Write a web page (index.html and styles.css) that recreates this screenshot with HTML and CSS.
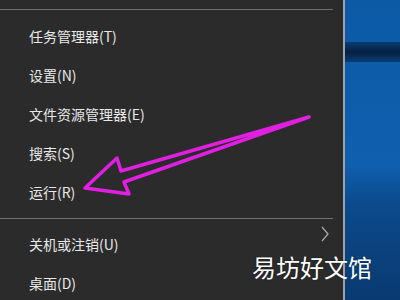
FILE: index.html
```html
<!DOCTYPE html>
<html lang="zh-CN">
<head>
    <meta charset="UTF-8">
    <meta name="viewport" content="width=device-width, initial-scale=1.0">
    <title>开始菜单</title>
    <link rel="stylesheet" href="styles.css">
</head>
<body>
    <div id="screen">
        <!-- Win+X menu -->
        <div id="menu">
            <div class="separator"></div>
            <div class="item">任务管理器(T)</div>
            <div class="item">设置(N)</div>
            <div class="item">文件资源管理器(E)</div>
            <div class="item">搜索(S)</div>
            <div class="item">运行(R)</div>
            <div class="separator second"></div>
            <div class="item">
                <span>关机或注销(U)</span>
                <svg class="chevron" width="10" height="16" viewBox="0 0 10 16">
                    <polyline points="2,1 8,8 2,15" fill="none" stroke="#a8a8a8" stroke-width="1.3"/>
                </svg>
            </div>
            <div class="item">桌面(D)</div>
        </div>

        <div id="edge"></div>

        <!-- Desktop wallpaper -->
        <div id="desktop">
            <div class="band"></div>
        </div>

        <!-- Hand-drawn arrow -->
        <svg id="arrow" width="400" height="300" viewBox="0 0 400 300">
            <polygon points="85,188 117,158 121,171 309,117 124,182 129,194"
                     fill="none" stroke="#e01fe0" stroke-width="3.5" stroke-linejoin="round"/>
        </svg>

        <div id="watermark">易坊好文馆</div>
    </div>
</body>
</html>
```

FILE: styles.css
```css
/* Main styling */
body {
    margin: 0;
    font-family: "Noto Sans CJK SC", "Noto Sans", sans-serif;
    background-color: #2b2b2b;
}

#screen {
    position: relative;
    display: flex;
    width: 400px;
    height: 300px;
    overflow: hidden;
}

#menu {
    width: 343px;
    padding-top: 9px;
    background-color: #2b2b2b;
}

.separator {
    width: 333px;
    height: 1px;
    margin-bottom: 6px;
    background-color: #6e6e6e;
}

.separator.second {
    margin-top: 7px;
    margin-bottom: 5px;
}

.item {
    display: flex;
    align-items: center;
    justify-content: space-between;
    height: 39px;
    padding-left: 29px;
    padding-right: 13px;
    font-size: 14px;
    color: #e8e8e8;
}

.chevron {
    margin-top: -20px;
}

#edge {
    width: 2px;
    background-color: #9aa3ad;
}

#desktop {
    flex: 1;
    background: linear-gradient(to bottom, #0c5aa6 0%, #0e5fae 55%, #0b4a8c 68%, #0a3a70 100%);
}

#desktop .band {
    height: 20px;
    margin-top: 42px;
    background: linear-gradient(to bottom, #0a3d74, #06203f 50%, #0a3d74);
}

/* Overlays */
#arrow {
    position: absolute;
    top: 0;
    left: 0;
}

#watermark {
    position: absolute;
    left: 252px;
    top: 255px;
    font-size: 24px;
    line-height: 24px;
    color: #ffffff;
    text-shadow: 0 0 2px rgba(0, 0, 0, 0.4);
}
```
